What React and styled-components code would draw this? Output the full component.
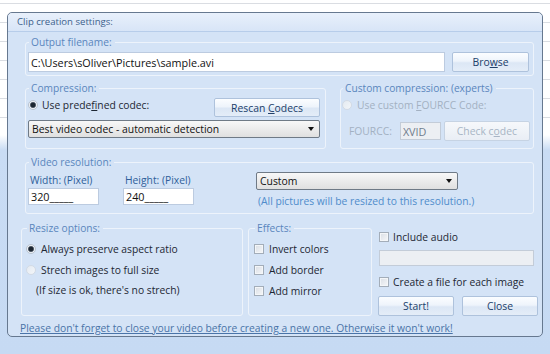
import React from 'react';
import styled, { createGlobalStyle } from 'styled-components';

const Global = createGlobalStyle`
  html, body { margin: 0; padding: 0; }
  body {
    width: 550px;
    height: 354px;
    overflow: hidden;
    font-family: "Open Sans", "Noto Sans", sans-serif;
    font-size: 10.3px;
    color: #1d2733;
    background:
      repeating-linear-gradient(to bottom, transparent 0, transparent 18px, #dadde2 18px, #dadde2 19px) 0 -15px / 100% 150px no-repeat,
      linear-gradient(to bottom, #ffffff 0, #ffffff 135px, #c9dcf4 150px, #c6daf3 100%);
  }
  * { box-sizing: border-box; }
`;

const Window = styled.div`
  margin: 12px 0 0 7px;
  width: 536px;
  height: 325px;
  border: 1px solid #66788f;
  border-radius: 5px;
  background: #d4e3f6;
  display: flex;
  flex-direction: column;
  overflow: hidden;
`;

const TitleBar = styled.div`
  height: 19px;
  padding-left: 9px;
  line-height: 18px;
  font-size: 9.6px;
  color: #3d5f8c;
  background: linear-gradient(to bottom, #e8f0fb, #d8e5f7);
  border-bottom: 1px solid #b7cdea;
  border-radius: 4px 4px 0 0;
`;

const Content = styled.div`
  display: flex;
  flex-direction: column;
  padding: 0 6px 0 12px;
`;

const Row = styled.div`
  display: flex;
  align-items: stretch;
  margin: ${p => p.$m || '0'};
`;

const Group = styled.fieldset`
  margin: ${p => p.$m || '0'};
  min-width: 0;
  width: ${p => p.$w || 'auto'};
  flex: ${p => (p.$w ? 'none' : '1')};
  padding: ${p => p.$pad || '3px 2px'};
  border: 1px solid #edf3fb;
  border-radius: 3px;
`;

const Legend = styled.legend`
  padding: 0 3px 0 2px;
  margin-left: 1px;
  line-height: 14px;
  font-size: 10.2px;
  color: #5a86bd;
`;

const TextBox = styled.input`
  width: ${p => p.$w};
  height: ${p => p.$h || '20px'};
  border: 1px solid ${p => p.$disabled ? '#c3ccd8' : '#bccbe0'};
  background: ${p => p.$disabled ? '#eceff3' : '#ffffff'};
  padding: 0 2px;
  font-family: "Open Sans", "Noto Sans", sans-serif;
  font-size: ${p => p.$fs || '10.8px'};
  color: ${p => p.$color || '#111'};
  outline: none;
  margin: 0;
`;

const Button = styled.div`
  width: ${p => p.$w};
  height: ${p => p.$h || '20px'};
  display: flex;
  align-items: center;
  justify-content: center;
  border: 1px solid ${p => p.$disabled ? '#c6d3e3' : '#aec2dc'};
  border-radius: 2px;
  background: ${p => p.$disabled
    ? 'linear-gradient(to bottom, #f6f8fb, #e9eef5)'
    : 'linear-gradient(to bottom, #fbfdff 0%, #eef4fb 45%, #dce7f5 55%, #e4edf8 100%)'};
  color: ${p => p.$disabled ? '#a8b5c5' : '#21406a'};
  font-size: 10.4px;
  margin: ${p => p.$m || '0'};
  flex: none;
  white-space: pre;
`;

const Select = styled.div`
  width: ${p => p.$w};
  height: 18px;
  margin: ${p => p.$m || '0'};
  display: flex;
  align-items: center;
  justify-content: space-between;
  padding: 0 5px 0 3px;
  border: 1px solid #6f7a86;
  border-radius: 2px;
  background: linear-gradient(to bottom, #f8f8f8, #e0e0e0);
  color: #111;
  font-size: 10.4px;
  flex: none;
`;

const Arrow = styled.span`
  width: 0;
  height: 0;
  border-left: 3px solid transparent;
  border-right: 3px solid transparent;
  border-top: 4px solid #111;
`;

const Option = styled.div`
  display: flex;
  align-items: center;
  height: ${p => p.$h || '14px'};
  margin: ${p => p.$m || '0'};
  color: ${p => p.$disabled ? '#a3b1c2' : '#1d2733'};
  white-space: nowrap;
`;

const Radio = styled.span`
  width: 10px;
  height: 10px;
  border-radius: 50%;
  flex: none;
  margin-right: ${p => p.$gap || '5px'};
  border: 1px solid ${p => p.$disabled ? '#d3dbe5' : '#b9c4d1'};
  background: ${p => p.$checked
    ? 'radial-gradient(circle, #1c2631 0, #1c2631 2px, #6b7684 2.8px, #eef1f5 3.4px)'
    : p.$disabled
      ? 'linear-gradient(135deg, #e4eaf1, #f3f6f9)'
      : 'linear-gradient(135deg, #d7dee7, #f4f6f9)'};
`;

const Check = styled.span`
  width: 10px;
  height: 10px;
  flex: none;
  margin-right: ${p => p.$gap || '5px'};
  border: 1px solid #a3adb9;
  background: linear-gradient(135deg, #d9dee5, #f6f7f9);
  box-shadow: inset 0 0 0 1px #f4f6f8;
`;

const Label = styled.div`
  line-height: 14px;
  height: 14px;
  padding-left: 2px;
  margin: ${p => p.$m || '0'};
  color: ${p => p.$color || '#2f5f9a'};
  white-space: nowrap;
`;

const Field = styled.div`
  display: flex;
  flex-direction: column;
  margin: ${p => p.$m || '0'};
`;

const Stack = styled.div`
  display: flex;
  flex-direction: column;
  width: ${p => p.$w || 'auto'};
  flex: ${p => (p.$w ? 'none' : '1')};
  margin: ${p => p.$m || '0'};
`;

const Line = styled.div`
  display: flex;
  align-items: ${p => p.$align || 'center'};
  justify-content: ${p => p.$justify || 'flex-start'};
  margin: ${p => p.$m || '0'};
`;

const Hint = styled.div`
  line-height: 14px;
  margin: ${p => p.$m || '0'};
  padding-left: 2px;
  color: #4f8ccb;
  white-space: nowrap;
`;

const Disabled = styled.span`
  color: #a3b1c2;
  margin-right: ${p => p.$mr || '0'};
`;

const Note = styled.div`
  height: 21px;
  line-height: 21px;
  margin-left: 10px;
  color: #1d2733;
`;

const Link = styled.a`
  display: block;
  line-height: 14px;
  margin-top: 5px;
  color: #4a74a8;
  text-decoration: underline;
  white-space: nowrap;
  cursor: pointer;
`;

export default function App() {
  return (
    <>
      <Global />
      <Window>
        <TitleBar>Clip creation settings:</TitleBar>
        <Content>
          <Row $m="3px 2px 0 5px">
            <Group $pad="3px 2px 3px 2px">
              <Legend>Output filename:</Legend>
              <Line>
                <TextBox $w="417px" defaultValue={'C:\\Users\\sOliver\\Pictures\\sample.avi'} readOnly />
                <Button $w="77px" $m="0 0 0 7px"><span>Bro<u>w</u>se</span></Button>
              </Line>
            </Group>
          </Row>

          <Row $m="5px 2px 0 5px">
            <Group $w="301px" $pad="3px 5px 10px 2px">
              <Legend>Compression:</Legend>
              <Line $align="flex-start" $justify="space-between">
                <Option>
                  <Radio $checked $gap="4px" />
                  <span>Use prede<u>f</u>ined codec:</span>
                </Option>
                <Button $w="106px" $h="19px"><span>Rescan <u>C</u>odecs</span></Button>
              </Line>
              <Select $w="292px" $m="3px 0 0 0">
                <span>Best video codec - automatic detection</span>
                <Arrow />
              </Select>
            </Group>
            <Group $m="0 0 0 14px" $pad="3px 6px 6px 1px">
              <Legend>Custom compression: (experts)</Legend>
              <Option $disabled>
                <Radio $disabled $gap="5px" />
                <span>Use custom <u>F</u>OURCC Code:</span>
              </Option>
              <Line $m="9px 0 0 7px">
                <Disabled $mr="8px">FOURCC:</Disabled>
                <TextBox $w="41px" $h="18px" $disabled $color="#6f7c8c" defaultValue="XVID" readOnly />
                <Button $w="86px" $m="0 0 0 3px" $disabled><span>Check c<u>o</u>dec</span></Button>
              </Line>
            </Group>
          </Row>

          <Row $m="6px 2px 0 5px">
            <Group $pad="3px 2px 5px 2px">
              <Legend>Video resolution:</Legend>
              <Line $align="flex-start">
                <Field $m="1px 0 0 0">
                  <Label $m="0 0 1px 0">Width: (Pixel)</Label>
                  <TextBox $w="71px" $h="17px" defaultValue="320_____" readOnly />
                </Field>
                <Field $m="1px 0 0 24px">
                  <Label $m="0 0 1px 0">Height: (Pixel)</Label>
                  <TextBox $w="71px" $h="17px" defaultValue="240_____" readOnly />
                </Field>
                <Stack $m="0 0 0 62px">
                  <Select $w="202px">
                    <span>Custom</span>
                    <Arrow />
                  </Select>
                  <Hint $m="4px 0 0 0">(All pictures will be resized to this resolution.)</Hint>
                </Stack>
              </Line>
            </Group>
          </Row>

          <Row $m="7px 0 0 1px">
            <Group $w="222px" $pad="3px 4px 4px 4px">
              <Legend>Resize options:</Legend>
              <Option $h="21px">
                <Radio $checked />
                <span>Always preserve aspect ratio</span>
              </Option>
              <Option $h="21px">
                <Radio $disabled />
                <span>Strech images to full size</span>
              </Option>
              <Note>(If size is ok, there's no strech)</Note>
            </Group>
            <Group $w="124px" $m="0 0 0 5px" $pad="3px 4px 4px 5px">
              <Legend>Effects:</Legend>
              <Option $h="21px">
                <Check />
                <span>Invert colors</span>
              </Option>
              <Option $h="21px">
                <Check />
                <span>Add border</span>
              </Option>
              <Option $h="21px">
                <Check />
                <span>Add mirror</span>
              </Option>
            </Group>
            <Stack $m="9px 0 0 6px">
              <Option $m="0 0 0 1px">
                <Check $gap="4px" />
                <span>Include audio</span>
              </Option>
              <Line $m="6px 0 0 1px">
                <TextBox $w="155px" $h="16px" $disabled readOnly defaultValue="" />
              </Line>
              <Option $m="9px 0 0 1px">
                <Check $gap="4px" />
                <span>Create a file for each image</span>
              </Option>
              <Line $m="7px 0 0 0">
                <Button $w="76px"><span>Start!</span></Button>
                <Button $w="76px" $m="0 0 0 8px"><span>Close</span></Button>
              </Line>
            </Stack>
          </Row>

          <Link>Please don't forget to close your video before creating a new one. Otherwise it won't work!</Link>
        </Content>
      </Window>
    </>
  );
}
